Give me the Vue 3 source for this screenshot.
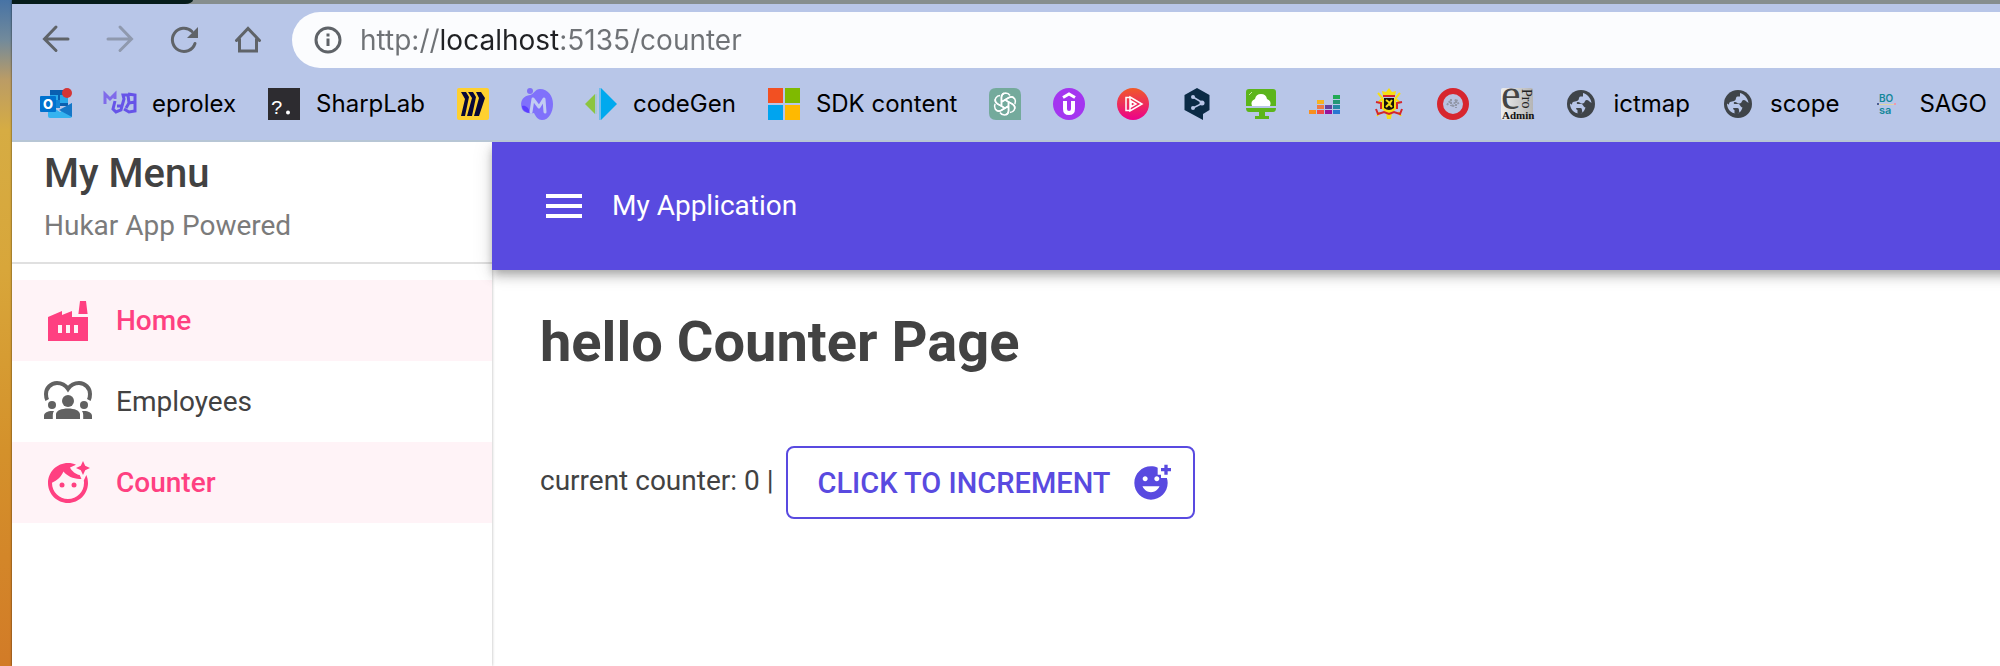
<script setup>
import { ref } from 'vue'

const count = ref(0)
const open = ref(true)
const address = ref('http://localhost:5135/counter')

const bookmarks = [
  { icon: 'outlook', title: 'Outlook' },
  { icon: 'eprolex', label: 'eprolex' },
  { icon: 'sharplab', label: 'SharpLab' },
  { icon: 'miro', title: 'Miro' },
  { icon: 'mural', title: 'M' },
  { icon: 'codegen', label: 'codeGen' },
  { icon: 'microsoft', label: 'SDK content' },
  { icon: 'gpt', title: 'Chat' },
  { icon: 'udemy', title: 'Udemy' },
  { icon: 'play', title: 'Pluralsight' },
  { icon: 'deepl', title: 'DeepL' },
  { icon: 'monitor', title: 'Cloud desktop' },
  { icon: 'deezer', title: 'Deezer' },
  { icon: 'crest', title: 'Belgium' },
  { icon: 'ring', title: 'Ring' },
  { icon: 'epro', title: 'ePro Admin' },
  { icon: 'globe', label: 'ictmap' },
  { icon: 'globe', label: 'scope' },
  { icon: 'bosa', label: 'SAGO' }
]

const menu = [
  { icon: 'factory', label: 'Home', active: true },
  { icon: 'people', label: 'Employees', active: false },
  { icon: 'face', label: 'Counter', active: true }
]
</script>

<template>
  <div class="desktop">
    <div class="window">
      <div class="tabstrip"><div class="tab"></div></div>

      <header class="chrome">
        <div class="toolbar">
          <button class="nav" aria-label="Back">
            <svg viewBox="0 0 32 32"><path d="M28 15H5M16 3 4.500 15 16 26.500" /></svg>
          </button>
          <button class="nav dim" aria-label="Forward">
            <svg viewBox="0 0 32 32"><path d="M4 15h23M16 3l11.500 12L16 26.500" /></svg>
          </button>
          <button class="nav" aria-label="Reload">
            <svg viewBox="0 0 32 32">
              <path d="M27 19.500A11.600 11.600 0 1 1 24 7.500" />
              <path class="solid" d="M30 3v11H19z" />
            </svg>
          </button>
          <button class="nav" aria-label="Home page">
            <svg viewBox="0 0 32 32"><path d="M4.500 16.500 16 4.500l11.500 12M7.500 15v12h17V15" /></svg>
          </button>
          <div class="address">
            <svg class="info" viewBox="0 0 32 32" aria-hidden="true">
              <circle cx="16" cy="16" r="12" />
              <path d="M16 14.500v7.500M16 9.500v3" />
            </svg>
            <input v-model="address" class="url" type="text" aria-label="Address" spellcheck="false" />
          </div>
        </div>

        <nav class="bookmarks" aria-label="Bookmarks">
          <a v-for="(b, i) in bookmarks" :key="i" class="bookmark" href="#" :aria-label="b.label || b.title">
            <svg class="favicon" viewBox="0 0 32 32" aria-hidden="true">
              <g v-if="b.icon === 'outlook'">
                <path fill="#0a5fb0" d="M10 2h18v16H10z" />
                <path fill="#28a8ea" d="M10 7h8v6h-8zM20 7h8v8h-8z" />
                <path fill="#1484d6" d="M10 12h10v8H10z" />
                <path fill="#35b3f0" d="M8 16l12 8 12-9v13q0 2-2 2H10q-2 0-2-2z" />
                <path fill="#1577c8" d="M32 15v14L19 22z" />
                <rect y="8" width="16" height="16" rx="1" fill="#0072cf" />
                <text x="8" y="21" text-anchor="middle" font-size="13" font-weight="800" fill="#fff">O</text>
                <circle cx="27" cy="5" r="5" fill="#d43535" />
              </g>
              <g v-else-if="b.icon === 'eprolex'" fill="none" stroke="#6654e8" stroke-width="3">
                <path d="M1 16V6l5 5 5-5v5" stroke="#806bea" />
                <path d="M11 13l-2 8 3 3 5-2 1-4 2-7-1-4h5M13 18h6M24 6l7 1v16l-6 1-5-3M31 14l-6 1-1-8M25 15l-3 5" />
              </g>
              <g v-else-if="b.icon === 'sharplab'">
                <rect width="32" height="32" fill="#2d2c30" />
                <text x="3" y="26" font-size="20" class="mono" fill="#fff">?</text>
                <circle cx="20" cy="24.500" r="2" fill="#fff" />
              </g>
              <g v-else-if="b.icon === 'miro'">
                <rect width="32" height="32" rx="2" fill="#ffd02f" />
                <path fill="#090838" d="M4 4h5l3 5L8 28H4l4-17zM11 4h5l3 5-4 19h-5l5-18zM19 4h5l4 6-6 18h-5l5-18z" />
              </g>
              <g v-else-if="b.icon === 'mural'">
                <circle cx="9" cy="3" r="3" fill="#8071f5" />
                <path fill="#8071fb" d="M19 1c8 0 13 7 13 15s-4 16-11 16c-4 0-6-3-8-7-4 1-10 0-12-4C-2 12 3 8 9 7c4-1 5-6 10-6z" />
                <path fill="#5b3fff" d="M1 18c3-1 7 1 8 7-4 0-8-3-8-7z" />
                <path fill="none" stroke="#c2cdf2" stroke-width="3" stroke-linejoin="round" stroke-linecap="round" d="M10 24l2-13 6 8 5-8 1 13" />
              </g>
              <g v-else-if="b.icon === 'codegen'">
                <path fill="#8cc540" d="M0 16 10 6v20z" />
                <path fill="#a6c7d5" d="M10 6h2v20h-2z" />
                <path fill="#6fbdea" d="M14 0h2v32h-2z" />
                <path fill="#00a9ee" d="M16 0l16 16-16 16z" />
              </g>
              <g v-else-if="b.icon === 'microsoft'">
                <path fill="#f25022" d="M0 0h15v15H0z" /><path fill="#7fba00" d="M17 0h15v15H17z" />
                <path fill="#00a4ef" d="M0 17h15v15H0z" /><path fill="#ffb900" d="M17 17h15v15H17z" />
              </g>
              <g v-else-if="b.icon === 'gpt'">
                <path fill="#74aa9c" d="M7 0h18q7 0 7 7v25H7q-7 0-7-7V7q0-7 7-7z" />
                <g fill="none" stroke="#fff" stroke-width="1.500" stroke-linejoin="round">
                  <path v-for="n in 6" :key="n" :transform="`rotate(${n * 60} 16 16)`" d="M12.500 18V9.500q0-4 4-4.500 3 0 4.500 2.500M12.500 14l7.500-4.500q3-1.500 5 .5" />
                </g>
              </g>
              <g v-else-if="b.icon === 'udemy'">
                <circle cx="16" cy="16" r="16" fill="#a435f0" />
                <path fill="none" stroke="#fff" stroke-width="3" d="M10 9.500 16 6l6 3.500" />
                <path fill="none" stroke="#fff" stroke-width="4" d="M12 13v8q0 4 4 4t4-4v-8" />
              </g>
              <g v-else-if="b.icon === 'play'">
                <defs><linearGradient id="playFill" x2="0" y2="1"><stop stop-color="#f05a28" /><stop offset="1" stop-color="#ec008c" /></linearGradient></defs>
                <circle cx="16" cy="16" r="16" fill="url(#playFill)" />
                <path fill="none" stroke="#fff" stroke-width="1.500" d="M13 9.500H9v13h4M13 9l12 7-12 7zM14 13l5 3-5 3z" />
              </g>
              <g v-else-if="b.icon === 'deepl'">
                <path fill="#0b2b46" d="M16 0l12.500 7v15L22 26v6L3.500 22V7z" />
                <path fill="none" stroke="#b8c6e8" stroke-width="1.500" d="M12 9l10 6-10 5" />
                <g fill="#b8c6e8"><circle cx="12" cy="9" r="2" /><circle cx="21" cy="15" r="2.500" /><circle cx="12" cy="20" r="2" /></g>
              </g>
              <g v-else-if="b.icon === 'monitor'">
                <path fill="#5cb51b" d="M4 1h24q3 0 3 3v14H1V4q0-3 3-3zM1 20h30q0 4-3 4h-8v4h4v3H10v-3h4v-4H4q-3 0-3-4z" />
                <path fill="#fff" d="M7 18q-2-5 3-7 1-5 6-5t6 5q5 2 3 7z" />
                <path fill="none" stroke="#c5e8a5" d="M4 7l3-3" />
              </g>
              <g v-else-if="b.icon === 'deezer'">
                <path fill="#f8901e" d="M0 22h7v4H0z" /><path fill="#f5b321" d="M8 12h7v4H8z" />
                <path fill="#ee7a43" d="M8 17h7v4H8z" /><path fill="#ef4e45" d="M8 22h7v4H8z" />
                <path fill="#65419e" d="M16 17h7v4h-7z" /><path fill="#9a139b" d="M16 22h7v4h-7z" />
                <path fill="#21aa55" d="M24 7h7v4h-7z" /><path fill="#239775" d="M24 12h7v4h-7z" />
                <path fill="#2489a5" d="M24 17h7v4h-7z" /><path fill="#2977d2" d="M24 22h7v4h-7z" />
              </g>
              <g v-else-if="b.icon === 'crest'">
                <path fill="none" stroke="#f6df14" stroke-width="2" d="M5 5l5 6M27 5l-5 6M7 24l-3 4M25 24l3 4M9 11l-4 4M23 11l4 4" />
                <path fill="#f6df14" d="M10 8 9 3l4 1 3-4 3 4 4-1-1 5zM9 11h14v10l-4 4-1 6h-4l-1-6-4-4z" />
                <path fill="none" stroke="#d5252d" stroke-width="2" d="M10 8h12M3 14l5 1v6M29 14l-5 1v6M3 21l2 5 6-2 5 2 5-2 6 2 2-5" />
                <path fill="#16120c" d="M11 10h10v10q-5 4-10 0z" />
                <path fill="none" stroke="#f6df14" stroke-width="2" d="M13 12l4 3-4 4M19 12l-3 4 3 3" />
              </g>
              <g v-else-if="b.icon === 'ring'">
                <circle cx="16" cy="16" r="13" fill="#b9c3e1" stroke="#d7262e" stroke-width="6" />
                <path fill="none" stroke="#9298a8" stroke-width="2" stroke-dasharray="2 1" d="M10 17l3-4 3 6 3-8 3 6M14 11v7M19 13v7" />
              </g>
              <g v-else-if="b.icon === 'epro'" class="roman">
                <defs><linearGradient id="silver"><stop stop-color="#ededed" /><stop offset="1" stop-color="#b5b5b5" /></linearGradient></defs>
                <rect width="32" height="32" rx="2" fill="url(#silver)" />
                <text x="0" y="21" font-size="44" fill="#444">e</text>
                <text font-size="14" fill="#222" transform="translate(21 1) rotate(90)">Pro</text>
                <text x="1" y="31" font-size="11" font-weight="700" fill="#111">Admin</text>
              </g>
              <g v-else-if="b.icon === 'globe'">
                <circle cx="16" cy="16" r="14" fill="#3f4449" />
                <path fill="#b8c6e8" d="M18 5c4 1 8 5 8.500 10-2-1-2.500-3-5-3-2 0-1 3-4 3.500-2 .5-3-2-5-1.500-1 0-1 2 0 2h4c2 .5 1.500 3 4 3.500-1 3-2 5-5 6C9 26 5 21 5 15.500l5 3c2 1 .5 3 2.500 3.500V25c2 1 4 .5 5-.5-1-3 0-4-2-4.500H10c-3-1-4-4-2-6l4-1c3-1 1-4 3.500-4.500H18z" />
              </g>
              <g v-else font-weight="600" fill="#148799">
                <text x="8" y="14" font-size="10">BO</text>
                <text x="8" y="26" font-size="11">sa</text>
                <path fill="#ddd5a6" d="M8 16h15v1H8z" /><path fill="#4c5d91" d="M6 15h2v2H6z" /><path fill="#ee99ae" d="M23 15h2v2h-2z" />
              </g>
            </svg>
            <span v-if="b.label">{{ b.label }}</span>
          </a>
        </nav>
      </header>

      <div class="app">
        <aside v-if="open" class="drawer">
          <div class="drawer-head">
            <h2>My Menu</h2>
            <p>Hukar App Powered</p>
          </div>
          <nav class="menu" aria-label="Main">
            <a v-for="m in menu" :key="m.label" href="#" class="item" :class="{ active: m.active }">
              <svg viewBox="0 0 24 24" aria-hidden="true">
                <path v-if="m.icon === 'factory'" fill-rule="evenodd" d="M22 22H2V10l7-3v2l5-2v3h8zM17.200 8.500 18 2h3l.8 6.500zM11 18h2v-4h-2zM7 18h2v-4H7zM17 14h-2v4h2z" />
                <g v-else-if="m.icon === 'people'">
                  <path fill="none" stroke="currentColor" stroke-width="2" d="M1.600 11C1 9.800 1 9 1 8a5.500 5.500 0 0 1 5.500-5.500C9 2.500 10.800 3.700 12 5.500c1.200-1.800 3-3 5.500-3A5.500 5.500 0 0 1 23 8c0 1 0 1.800-.6 3" />
                  <circle cx="12" cy="11.500" r="3" /><circle cx="4" cy="13.500" r="2" /><circle cx="20" cy="13.500" r="2" />
                  <path d="M6 20.500v-2.200c0-2 2.800-3 6-3s6 1 6 3v2.200zM0 20.500v-1.600c0-1.400 1.900-2.400 4-2.400h1c-.4.600-.6 1.200-.6 1.900v2.100zM24 20.500v-1.600c0-1.400-1.900-2.400-4-2.400h-1c.4.600.6 1.200.6 1.900v2.100z" />
                </g>
                <g v-else>
                  <path d="M16 2.900C14.900 2.300 13.500 2 12 2 6.480 2 2 6.480 2 12s4.480 10 10 10 10-4.480 10-10c0-1.430-.3-2.780-.84-4.010l-1.270 2.760c.07.410.11.820.11 1.250 0 4.410-3.590 8-8 8s-8-3.590-8-8v-.14c2.600-.98 4.690-2.990 5.740-5.550C11.600 8.600 14.500 10 17.740 10l1-.05-.9-1.900C15.800 7.700 14 6.200 13 4.300z" />
                  <circle cx="9" cy="13" r="1.250" /><circle cx="15" cy="13" r="1.250" />
                  <path d="M19.500 1l1.100 2.400L23 4.500l-2.400 1.100L19.500 8l-1.100-2.400L16 4.500l2.400-1.100z" />
                </g>
              </svg>
              <span>{{ m.label }}</span>
            </a>
          </nav>
        </aside>

        <div class="content">
          <header class="appbar">
            <button class="burger" aria-label="Toggle menu" @click="open = !open">
              <svg viewBox="0 0 24 24"><path d="M3 18h18v-2H3zm0-5h18v-2H3zm0-7v2h18V6z" /></svg>
            </button>
            <span>My Application</span>
          </header>
          <main class="page">
            <h1>hello Counter Page</h1>
            <div class="counter">
              <span class="status">current counter: {{ count }} |</span>
              <button class="increment" @click="count++">
                <span>Click to increment</span>
                <svg viewBox="0 0 24 24" aria-hidden="true">
                  <path d="M18 9V7h-2V2.840C14.770 2.300 13.420 2 11.990 2 6.470 2 2 6.480 2 12s4.470 10 9.990 10C17.520 22 22 17.520 22 12c0-1.050-.17-2.050-.47-3zm-2.500-1c.83 0 1.500.67 1.500 1.500s-.67 1.500-1.500 1.500-1.500-.67-1.500-1.500.67-1.500 1.500-1.500zm-7 0c.83 0 1.500.67 1.500 1.500S9.330 11 8.500 11 7 10.330 7 9.500 7.670 8 8.500 8zm3.500 9.500c-2.330 0-4.310-1.460-5.110-3.500h10.220c-.8 2.040-2.780 3.500-5.110 3.500zM22 3h2v2h-2v2h-2V5h-2V3h2V1h2z" />
                </svg>
              </button>
            </div>
          </main>
        </div>
      </div>
    </div>
  </div>
</template>

<style>
body {
  margin: 0;
}
</style>

<style scoped>
* {
  box-sizing: border-box;
}
.desktop {
  min-height: 100vh;
  display: flex;
  padding-left: 12px;
  background: linear-gradient(180deg, #4773a5 0, #728a9b 40px, #bb9c65 80px, #d6ac43 130px, #d8a63a 270px, #d4912b 450px, #d27b27 100%);
  overflow: hidden;
}
.window {
  flex: 1;
  min-width: 0;
  display: flex;
  flex-direction: column;
  background: #fff;
  box-shadow: 0 0 2px rgba(0, 0, 0, 0.7);
}
.tabstrip {
  height: 4px;
  background: #868e8e;
}
.tab {
  width: 181px;
  height: 4px;
  background: #061c1b;
  border-bottom-right-radius: 8px 4px;
}
.chrome {
  background: #b8c6e8;
  border-bottom: 2px solid #b7c6d5;
  font-family: Inter, "Liberation Sans", sans-serif;
  overflow: hidden;
}
.toolbar {
  display: flex;
  align-items: center;
  gap: 32px;
  padding: 8px 0 0 28px;
}
.nav {
  width: 32px;
  height: 32px;
  flex: none;
  padding: 0;
  border: 0;
  background: none;
}
svg {
  display: block;
}
.nav svg {
  width: 32px;
  height: 32px;
  fill: none;
  stroke: #5f6368;
  stroke-width: 3;
  stroke-linecap: round;
}
.nav .solid {
  fill: #5f6368;
  stroke: none;
}
.dim {
  opacity: 0.45;
}
.address {
  flex: 1;
  min-width: 0;
  height: 56px;
  margin-left: -4px;
  padding-left: 20px;
  display: flex;
  align-items: center;
  gap: 16px;
  background: #fbfcfe;
  border-radius: 28px 0 0 28px;
}
.info {
  width: 32px;
  height: 32px;
  flex: none;
  fill: none;
  stroke: #5f6368;
  stroke-width: 3;
}
.url {
  flex: 1;
  min-width: 0;
  height: 40px;
  padding: 0;
  border: 0;
  outline: 0;
  font: 400 28px/40px Inter, "Liberation Sans", sans-serif;
  color: transparent;
  background: linear-gradient(90deg, #6f7276 81px, #202124 81px, #202124 200px, #6f7276 200px);
  background-clip: text;
}
.bookmarks {
  display: flex;
  align-items: center;
  gap: 32px;
  height: 72px;
  padding-left: 28px;
}
.bookmark {
  display: flex;
  align-items: center;
  flex: none;
  gap: 16px;
  color: #000;
  font-size: 24px;
  line-height: 32px;
  text-decoration: none;
}
.favicon {
  width: 32px;
  height: 32px;
  overflow: visible;
}
.mono {
  font-family: "Liberation Mono", monospace;
}
.roman {
  font-family: "Liberation Serif", serif;
}
.app {
  flex: 1;
  display: flex;
  font-family: Roboto, "Liberation Sans", sans-serif;
  font-size: 28px;
  line-height: 40px;
  color: #424242;
}
.drawer {
  position: relative;
  z-index: 1;
  width: 480px;
  flex: none;
  background: #fff;
  box-shadow: 0 0 3px rgba(0, 0, 0, 0.3);
  clip-path: inset(0 -8px 0 0);
}
.drawer-head {
  height: 122px;
  padding: 0 32px;
  border-bottom: 2px solid #e0e0e0;
}
h2 {
  margin: 0;
  padding-top: 8px;
  font-size: 40px;
  font-weight: 500;
  line-height: 48px;
}
p {
  margin: 0;
  padding-top: 8px;
  color: #7b7b7b;
}
.menu {
  padding-top: 16px;
}
.item {
  display: flex;
  align-items: center;
  gap: 24px;
  height: 81px;
  padding: 0 32px;
  color: inherit;
  text-decoration: none;
}
.item svg {
  width: 48px;
  height: 48px;
  fill: currentColor;
  color: #616161;
}
.item.active,
.item.active svg {
  color: #ff4081;
}
.active {
  background: #fff3f7;
  font-weight: 500;
}
.content {
  flex: 1;
  min-width: 0;
}
.appbar {
  position: relative;
  z-index: 2;
  display: flex;
  align-items: center;
  gap: 24px;
  height: 128px;
  margin-right: -24px;
  padding: 0 48px;
  color: #fff;
  background: #594ae0;
  box-shadow: 0 4px 8px -2px rgba(0, 0, 0, 0.2), 0 8px 10px rgba(0, 0, 0, 0.14), 0 2px 20px rgba(0, 0, 0, 0.12);
  clip-path: inset(0 0 -40px -40px);
}
.burger {
  padding: 0;
  border: 0;
  background: none;
}
.burger svg {
  width: 48px;
  height: 48px;
  fill: #fff;
}
.page {
  padding: 32px 48px;
}
h1 {
  margin: 0;
  font-size: 56px;
  font-weight: 700;
  line-height: 80px;
}
.counter {
  display: flex;
  align-items: center;
  gap: 12px;
  padding-top: 64px;
}
.status {
  padding-bottom: 4px;
}
.increment {
  display: flex;
  align-items: center;
  gap: 20px;
  height: 73px;
  padding: 0 22px 0 30px;
  border: 2px solid #594ae0;
  border-radius: 8px;
  background: none;
  color: #594ae0;
  font: 500 29px/40px Roboto, "Liberation Sans", sans-serif;
  text-transform: uppercase;
}
.increment svg {
  width: 40px;
  height: 40px;
  fill: currentColor;
}
</style>
